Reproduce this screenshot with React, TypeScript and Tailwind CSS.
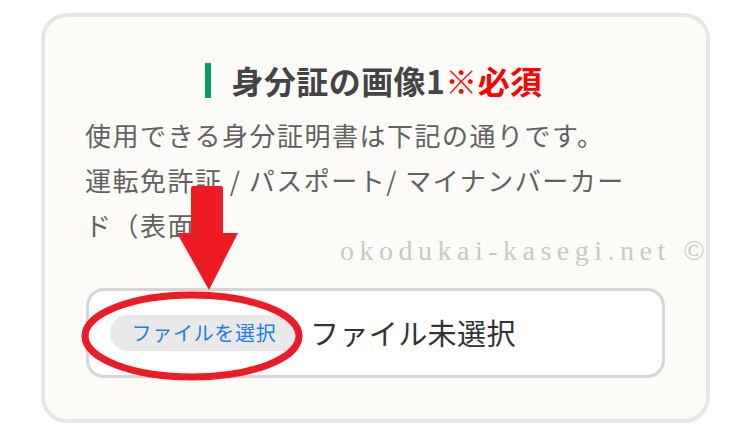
export default function App() {
  return (
    <div className="relative w-[750px] h-[436px] bg-white overflow-hidden font-['Noto_Sans_CJK_JP',sans-serif]">
      {/* card */}
      <div className="ml-[41px] mt-[13px] w-[669px] h-[410px] rounded-[26px] border-4 border-[#e6e6e6] bg-[#fcfbf7]">
        <div className="flex items-center justify-center gap-[21px] pt-[43px] pr-[4px]">
          <span className="block w-[6px] h-[35px] bg-[#0a9a63]" />
          <h2 className="text-[32px] leading-[40px] font-bold tracking-[0.4px] text-[#444444]">
            身分証の画像1<span className="text-[#ff0000]">※必須</span>
          </h2>
        </div>

        <div className="pl-[40px] pr-[20px]">
          <p className="mt-[12px] text-[26px] leading-[45px] tracking-[1.5px] text-[#616161]">
            <span className="block">使用できる身分証明書は下記の通りです。</span>
            <span className="block whitespace-nowrap">運転免許証 / パスポート/ マイナンバーカー</span>
            <span className="block">ド（表面</span>
          </p>

          {/* file input */}
          <div className="mt-[41px] ml-[1px] w-[579px] h-[90px] flex items-center pl-[21px] rounded-[18px] border-[3px] border-[#d6d6d6] bg-white">
            <button className="w-[188px] h-[36px] rounded-full bg-[#e9e9e9] text-[20px] tracking-[0.7px] text-[#1a7fe8] flex items-center justify-center">
              ファイルを選択
            </button>
            <span className="ml-[12px] text-[29px] tracking-[0.4px] text-[#333333]">ファイル未選択</span>
          </div>
        </div>
      </div>

      {/* watermark */}
      <div className="absolute left-[340px] top-[237px] text-[28px] leading-[28px] tracking-[5.5px] text-[#c9c9c9] font-['Liberation_Serif',serif] whitespace-nowrap">
        okodukai-kasegi.net ©
      </div>

      {/* annotation: arrow + circle */}
      <svg className="absolute left-0 top-0" width="750" height="436" viewBox="0 0 750 436">
        <path d="M193 186 H221 Q223 186 223 188 V233 H238 L209 290 L177 233 H191 V188 Q191 186 193 186 Z" fill="#ed1c24" />
        <ellipse cx="192" cy="336" rx="107" ry="41" fill="none" stroke="#ed1c24" strokeWidth="7" />
      </svg>
    </div>
  );
}
